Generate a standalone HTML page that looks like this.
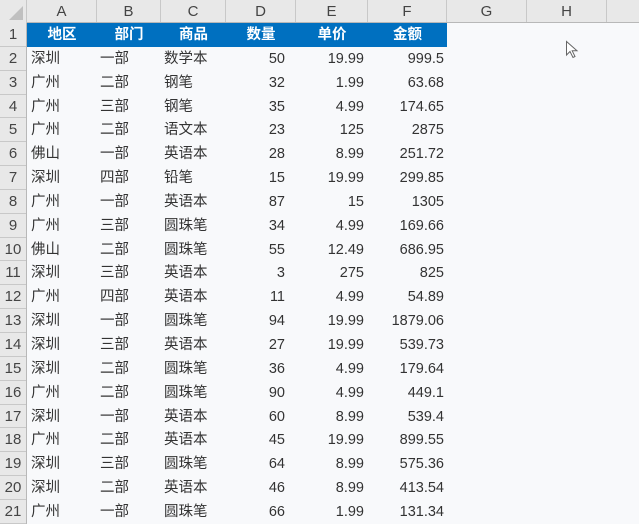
<!DOCTYPE html>
<html><head><meta charset="utf-8"><style>
*{margin:0;padding:0;box-sizing:border-box}
body{width:639px;height:511px;overflow:hidden;background:#f8f9fb;font-family:"Liberation Sans","Noto Sans CJK SC",sans-serif;font-size:14.5px;color:#333;position:relative}
.ch{position:absolute;top:0;left:0;width:639px;height:23px;background:#e8e8e8;border-bottom:1px solid #b8b8b8}
.ch div{position:absolute;top:0;height:22px;line-height:23px;text-align:center;color:#444;border-right:1px solid #c8c8c8;font-size:15px}
.corner{position:absolute;left:0;top:0;width:27px;height:23px;background:#e8e8e8;border-right:1px solid #c8c8c8}
.corner:after{content:"";position:absolute;right:3px;bottom:3px;border-left:14px solid transparent;border-bottom:14px solid #c0c0c0}
.rh{position:absolute;left:0;top:23px;width:27px;background:#e8e8e8;border-right:1px solid #b8b8b8}
.rh div{height:23.85px;line-height:24px;text-align:center;border-bottom:1px solid #c8c8c8;font-size:15px;color:#444}
.grid{position:absolute;left:27px;top:23px}
.r{height:23.85px;line-height:24px;display:flex;white-space:nowrap}
.r span{display:block;overflow:hidden}
.a{width:70px;padding-left:4px}.b{width:64px;padding-left:3px}.c{width:65px;padding-left:3px}
.d{width:70px;text-align:right;padding-right:11px}.e{width:72px;text-align:right;padding-right:4px}.f{width:79px;text-align:right;padding-right:3px}
.hd{background:#0070c0;color:#fff;font-weight:bold;width:420px}
.hd span{text-align:center!important;padding:0!important}
</style></head><body>
<div class="ch">
<div style="left:27px;width:70px">A</div><div style="left:97px;width:64px">B</div><div style="left:161px;width:65px">C</div><div style="left:226px;width:70px">D</div><div style="left:296px;width:72px">E</div><div style="left:368px;width:79px">F</div><div style="left:447px;width:80px">G</div><div style="left:527px;width:80px">H</div>
</div>
<div class="corner"></div>
<div class="rh"><div>1</div><div>2</div><div>3</div><div>4</div><div>5</div><div>6</div><div>7</div><div>8</div><div>9</div><div>10</div><div>11</div><div>12</div><div>13</div><div>14</div><div>15</div><div>16</div><div>17</div><div>18</div><div>19</div><div>20</div><div>21</div></div>
<div class="grid">
<div class="r hd"><span class="a">地区</span><span class="b">部门</span><span class="c">商品</span><span class="d">数量</span><span class="e">单价</span><span class="f">金额</span></div>
<div class="r"><span class="a">深圳</span><span class="b">一部</span><span class="c">数学本</span><span class="d">50</span><span class="e">19.99</span><span class="f">999.5</span></div>
<div class="r"><span class="a">广州</span><span class="b">二部</span><span class="c">钢笔</span><span class="d">32</span><span class="e">1.99</span><span class="f">63.68</span></div>
<div class="r"><span class="a">广州</span><span class="b">三部</span><span class="c">钢笔</span><span class="d">35</span><span class="e">4.99</span><span class="f">174.65</span></div>
<div class="r"><span class="a">广州</span><span class="b">二部</span><span class="c">语文本</span><span class="d">23</span><span class="e">125</span><span class="f">2875</span></div>
<div class="r"><span class="a">佛山</span><span class="b">一部</span><span class="c">英语本</span><span class="d">28</span><span class="e">8.99</span><span class="f">251.72</span></div>
<div class="r"><span class="a">深圳</span><span class="b">四部</span><span class="c">铅笔</span><span class="d">15</span><span class="e">19.99</span><span class="f">299.85</span></div>
<div class="r"><span class="a">广州</span><span class="b">一部</span><span class="c">英语本</span><span class="d">87</span><span class="e">15</span><span class="f">1305</span></div>
<div class="r"><span class="a">广州</span><span class="b">三部</span><span class="c">圆珠笔</span><span class="d">34</span><span class="e">4.99</span><span class="f">169.66</span></div>
<div class="r"><span class="a">佛山</span><span class="b">二部</span><span class="c">圆珠笔</span><span class="d">55</span><span class="e">12.49</span><span class="f">686.95</span></div>
<div class="r"><span class="a">深圳</span><span class="b">三部</span><span class="c">英语本</span><span class="d">3</span><span class="e">275</span><span class="f">825</span></div>
<div class="r"><span class="a">广州</span><span class="b">四部</span><span class="c">英语本</span><span class="d">11</span><span class="e">4.99</span><span class="f">54.89</span></div>
<div class="r"><span class="a">深圳</span><span class="b">一部</span><span class="c">圆珠笔</span><span class="d">94</span><span class="e">19.99</span><span class="f">1879.06</span></div>
<div class="r"><span class="a">深圳</span><span class="b">三部</span><span class="c">英语本</span><span class="d">27</span><span class="e">19.99</span><span class="f">539.73</span></div>
<div class="r"><span class="a">深圳</span><span class="b">二部</span><span class="c">圆珠笔</span><span class="d">36</span><span class="e">4.99</span><span class="f">179.64</span></div>
<div class="r"><span class="a">广州</span><span class="b">二部</span><span class="c">圆珠笔</span><span class="d">90</span><span class="e">4.99</span><span class="f">449.1</span></div>
<div class="r"><span class="a">深圳</span><span class="b">一部</span><span class="c">英语本</span><span class="d">60</span><span class="e">8.99</span><span class="f">539.4</span></div>
<div class="r"><span class="a">广州</span><span class="b">二部</span><span class="c">英语本</span><span class="d">45</span><span class="e">19.99</span><span class="f">899.55</span></div>
<div class="r"><span class="a">深圳</span><span class="b">三部</span><span class="c">圆珠笔</span><span class="d">64</span><span class="e">8.99</span><span class="f">575.36</span></div>
<div class="r"><span class="a">深圳</span><span class="b">二部</span><span class="c">英语本</span><span class="d">46</span><span class="e">8.99</span><span class="f">413.54</span></div>
<div class="r"><span class="a">广州</span><span class="b">一部</span><span class="c">圆珠笔</span><span class="d">66</span><span class="e">1.99</span><span class="f">131.34</span></div>
</div>
<svg style="position:absolute;left:565px;top:40px" width="16" height="20" viewBox="0 0 16 20"><path d="M1.5 1.5 L1.5 15 L5 11.5 L8 17.5 L10 16.5 L7.2 10.8 L12 10.8 Z" fill="#fff" stroke="#666" stroke-width="1"/></svg>
</body></html>
